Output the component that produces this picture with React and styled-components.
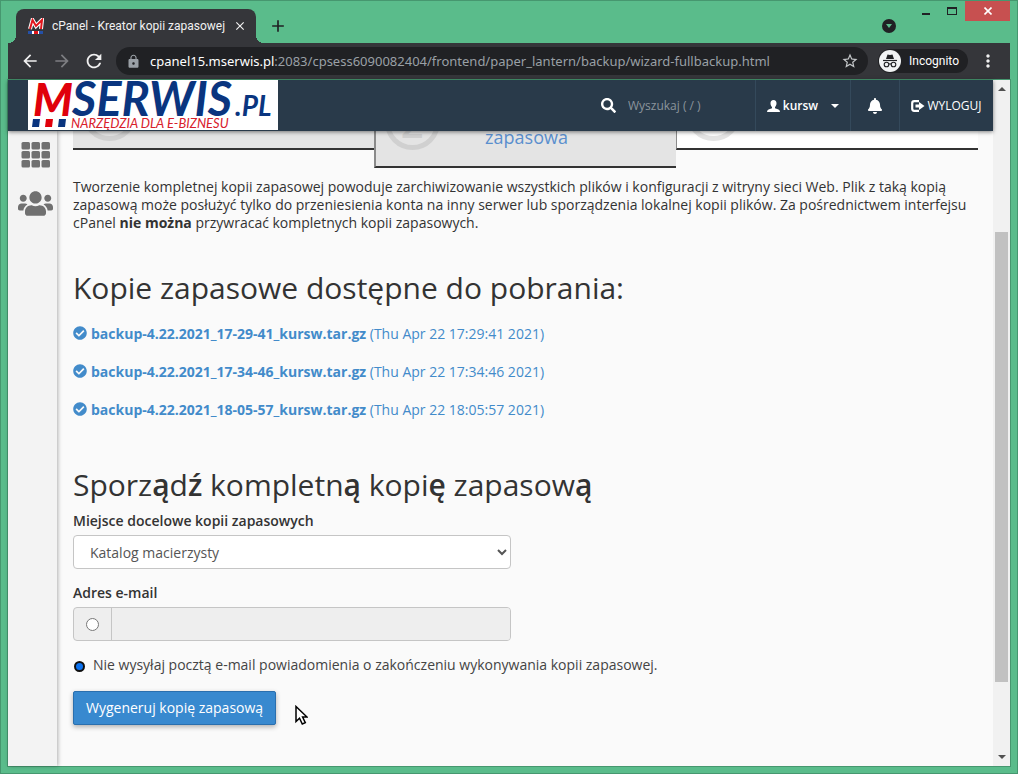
import React from "react";
import styled, { createGlobalStyle } from "styled-components";
import { FaUsers, FaSearch, FaBell, FaCheckCircle } from "react-icons/fa";
import { MdArrowBack, MdArrowForward, MdRefresh, MdLock, MdStarBorder, MdMoreVert, MdClose, MdAdd } from "react-icons/md";

const Global = createGlobalStyle`
  *, *::before, *::after { box-sizing: border-box; }
  body {
    margin: 0;
    color: #333;
    background: #fafafa;
    font: 14px/18px "Open Sans", "Noto Sans", sans-serif;
  }
  button, input, select { font: inherit; color: inherit; }
  h2, p, ul { margin: 0; padding: 0; }
`;

const Frame = styled.div`
  display: flex;
  flex-direction: column;
  min-height: 100vh;
  padding: 0 7px 7px;
  border: 1px solid #46976f;
  background: #5abc8b;
`;

const TabStrip = styled.div`
  display: flex;
  align-items: flex-start;
  height: 42px;
`;

const Tab = styled.div`
  position: relative;
  display: flex;
  align-items: center;
  width: 240px;
  height: 34px;
  margin: 8px 0 0 8px;
  padding: 0 8px 0 12px;
  border-radius: 8px 8px 0 0;
  background: #35363a;
  color: #f1f1f1;
  white-space: nowrap;
  &::before, &::after {
    content: "";
    position: absolute;
    bottom: 0;
    width: 8px;
    height: 8px;
  }
  &::before {
    left: -8px;
    background: radial-gradient(circle at 0 0, transparent 8px, #35363a 8px);
  }
  &::after {
    right: -8px;
    background: radial-gradient(circle at 100% 0, transparent 8px, #35363a 8px);
  }
`;

const TabTitle = styled.span`
  flex: 1;
  padding-left: 8px;
  font-family: Roboto, sans-serif;
  font-size: 12px;
`;

const IconButton = styled.button`
  display: flex;
  align-items: center;
  justify-content: center;
  flex: none;
  width: ${(p) => p.$w || 32}px;
  height: ${(p) => p.$h || 32}px;
  padding: 0;
  border: 0;
  background: ${(p) => p.$bg || "none"};
  color: ${(p) => p.$color || "#f1f1f1"};
`;

const WindowControls = styled.div`
  display: flex;
  align-items: flex-start;
  margin-left: auto;
`;

const TabMenu = styled.div`
  padding: 15px 13px 0 0;
`;

const NewTab = styled.div`
  padding: 9px 0 0 6px;
`;

const Toolbar = styled.div`
  display: flex;
  align-items: center;
  height: 37px;
  padding: 0 6px;
  border-bottom: 1px solid #232427;
  background: #35363a;
`;

const AddressBar = styled.div`
  display: flex;
  align-items: center;
  flex: 1;
  min-width: 0;
  height: 28px;
  margin: 0 10px 0 6px;
  padding: 0 2px 0 10px;
  border-radius: 14px;
  background: #202124;
`;

const Address = styled.span`
  flex: 1;
  margin-left: 9px;
  overflow: hidden;
  color: #9aa0a6;
  font-family: "Noto Sans", sans-serif;
  font-size: 13px;
  white-space: nowrap;
  b { color: #fff; font-weight: 400; }
`;

const Incognito = styled.div`
  display: flex;
  align-items: center;
  gap: 8px;
  height: 24px;
  margin-right: 4px;
  padding: 0 9px 0 1px;
  border-radius: 12px;
  background: #202124;
  color: #fff;
  font-family: Roboto, sans-serif;
  font-size: 12px;
`;

const Viewport = styled.div`
  display: flex;
  flex: 1;
  background: #fafafa;
  box-shadow: 0 0 0 1px #46976f;
`;

const Page = styled.div`
  display: flex;
  flex-direction: column;
  flex: 1;
  min-width: 0;
`;

const Scrollbar = styled.div`
  display: flex;
  flex-direction: column;
  align-items: center;
  width: 17px;
  padding: 7px 0;
  background: #f1f1f1;
  color: #505050;
`;

const Thumb = styled.div`
  flex: 450;
  width: 13px;
  background: #c1c1c1;
`;

const Track = styled.div`
  flex: ${(p) => p.$size};
`;

const Header = styled.header`
  position: relative;
  z-index: 2;
  display: flex;
  height: 51px;
  padding-left: 20px;
  background: #293a4a;
  box-shadow: 0 1px 4px rgba(0, 0, 0, 0.5);
  color: #fff;
`;

const LogoLink = styled.a`
  display: block;
  width: 250px;
  height: 50px;
  margin-right: auto;
  background: #fff;
`;

const Search = styled.label`
  display: flex;
  align-items: center;
  gap: 12px;
  width: 154px;
  input {
    width: 110px;
    padding: 0;
    border: 0;
    background: none;
    font-size: 12px;
  }
  input::placeholder { color: #8b949c; opacity: 1; }
`;

const NavButton = styled.button`
  display: flex;
  align-items: center;
  justify-content: center;
  width: ${(p) => p.$w}px;
  padding: 0;
  gap: ${(p) => p.$gap || 0}px;
  border: 0;
  border-left: 1px solid #34495b;
  background: none;
  font-size: 12px;
  font-weight: ${(p) => p.$weight || 400};
`;

const UserName = styled.span`
  padding-right: 10px;
`;

const Columns = styled.div`
  display: flex;
  flex: 1;
`;

const Sidebar = styled.nav`
  display: flex;
  flex-direction: column;
  align-items: center;
  gap: 16px;
  flex: none;
  width: 49px;
  padding: 8px 0 0 6px;
  background: #f3f3f3;
  box-shadow: 1px 0 4px rgba(0, 0, 0, 0.3);
`;

const SideLink = styled.a`
  display: flex;
  align-items: center;
  height: 32px;
  color: #707070;
`;

const Content = styled.main`
  flex: 1;
  min-width: 0;
  padding: 0 15px 16px 16px;
`;

const Steps = styled.div`
  display: flex;
  align-items: flex-start;
  height: 37px;
  margin-bottom: 10px;
`;

const Step = styled.div`
  display: flex;
  align-items: flex-end;
  flex: 1;
  height: ${(p) => (p.$active ? 37 : 19)}px;
  padding: 0 9px ${(p) => (p.$active ? 16 : 7)}px;
  overflow: hidden;
  border-bottom: 2px solid #333;
  border-left: ${(p) => (p.$first ? 0 : p.$active ? 2 : 1)}px solid #8a8a8a;
  background: ${(p) => (p.$todo ? "#fff" : "#e4e4e4")};
`;

const StepNumber = styled.span`
  display: flex;
  align-items: center;
  justify-content: center;
  flex: none;
  width: 55px;
  height: 55px;
  border: 5px solid ${(p) => (p.$todo ? "#e4e4e4" : "#d0d0d0")};
  border-radius: 50%;
  color: #d0d0d0;
  font-size: 40px;
  font-weight: 600;
  line-height: 44px;
`;

const StepTitle = styled.span`
  flex: 1;
  padding-right: 54px;
  color: #5a8fce;
  font-size: 18px;
  line-height: 26px;
  text-align: center;
`;

const Heading = styled.h2`
  font-size: 30px;
  font-weight: 400;
  line-height: 34px;
  b { font-weight: 600; }
`;

const Intro = styled.p`
  margin-bottom: 39px;
`;

const Backups = styled.ul`
  margin: 20px 0 49px;
  list-style: none;
  li { margin-bottom: 20px; }
`;

const BackupLink = styled.a`
  display: flex;
  align-items: flex-start;
  gap: 4px;
  color: #428bca;
  text-decoration: none;
  svg { margin-top: 1px; }
`;

const Form = styled.form`
  margin-top: 10px;
`;

const Label = styled.label`
  display: block;
  margin-bottom: 5px;
  font-weight: 600;
`;

const Field = styled.div`
  width: 438px;
  max-width: 100%;
  margin-bottom: 15px;
`;

const Select = styled.select`
  display: block;
  width: 100%;
  height: 34px;
  padding: 0 12px;
  border: 1px solid #c5c5c5;
  border-radius: 4px;
  background: #fff;
  color: #555;
`;

const InputGroup = styled.div`
  display: flex;
  height: 34px;
  overflow: hidden;
  border: 1px solid #c5c5c5;
  border-radius: 4px;
  background: #eee;
  input[type="email"] {
    flex: 1;
    min-width: 0;
    border: 0;
    border-left: 1px solid #c5c5c5;
    background: #eee;
  }
`;

const Addon = styled.span`
  display: flex;
  align-items: center;
  justify-content: center;
  width: 37px;
`;

const Radio = styled.input`
  width: 13px;
  height: 13px;
  margin: 0;
`;

const RadioFilled = styled.input`
  appearance: none;
  width: 11px;
  height: 11px;
  margin: 2px 0 0;
  border: 2px solid #101010;
  border-radius: 50%;
  background: #0b72f0;
`;

const Option = styled.label`
  display: flex;
  align-items: center;
  gap: 8px;
  padding-left: 1px;
  margin-bottom: 17px;
  color: #444;
`;

const Actions = styled.div`
  display: flex;
  align-items: flex-end;
  gap: 19px;
`;

const Primary = styled.button`
  height: 34px;
  padding: 0 12px;
  border: 1px solid #2a6fae;
  border-radius: 2px;
  background: #3889cf;
  box-shadow: 0 2px 5px rgba(0, 0, 0, 0.3);
  color: #fff;
`;

const backups = [
  ["backup-4.22.2021_17-29-41_kursw.tar.gz", "(Thu Apr 22 17:29:41 2021)"],
  ["backup-4.22.2021_17-34-46_kursw.tar.gz", "(Thu Apr 22 17:34:46 2021)"],
  ["backup-4.22.2021_18-05-57_kursw.tar.gz", "(Thu Apr 22 18:05:57 2021)"],
];

const Favicon = () => (
  <svg width="16" height="17" viewBox="0 0 16 17" aria-hidden="true">
    <path d="M2 11 4.500 2 8 8 14 2 13 11" fill="none" stroke="#fff" strokeWidth="4" />
    <path d="M2 11 4.500 2 8 8 14 2 13 11" fill="none" stroke="#e2161c" strokeWidth="2" />
    <path d="M0 13h4v3H0zM11 13h4v3h-4z" fill="#2450a8" />
    <path d="M4 13h2v3H4zM10 13h1v3h-1z" fill="#fff" />
    <path d="M6 13h4v3H6z" fill="#e2161c" />
  </svg>
);

const Logo = () => (
  <svg width="250" height="50" viewBox="0 0 250 50" role="img" aria-label="MSERWIS.PL">
    <g fontFamily="Lato, sans-serif" fontStyle="italic">
      <text x="5" y="36" fontSize="45" fontWeight="900" fill="#e0000b">M</text>
      <text x="44" y="36" fontSize="47" fontWeight="700" fill="#0a357f">SERWIS</text>
      <text x="207" y="36" fontSize="28" fontWeight="700" fill="#0a357f">.PL</text>
      <text x="43" y="48" fontSize="13" fill="#d8202a">NARZĘDZIA DLA E-BIZNESU</text>
    </g>
    <path d="M5 39h7l-1 8H4zM31 39h7l-1 8h-7z" fill="#0a357f" />
    <path d="M18 39h7l-1 8h-7z" fill="#e0000b" />
  </svg>
);

const IncognitoIcon = () => (
  <svg width="22" height="22" viewBox="0 0 22 22" aria-hidden="true">
    <circle cx="11" cy="11" r="11" fill="#f1f3f4" />
    <path d="M7 9 8.500 4.500 11 5l2.500-.5L15 9z" fill="#202124" />
    <path d="M4 10.500h14" stroke="#202124" strokeWidth="1.200" />
    <g fill="none" stroke="#202124" strokeWidth="1.100">
      <circle cx="7.500" cy="14.500" r="2.300" />
      <circle cx="14.500" cy="14.500" r="2.300" />
      <path d="M9.800 14.200q1.200-.8 2.400 0" />
    </g>
  </svg>
);

const UserIcon = () => (
  <svg width="13" height="12" viewBox="0 0 13 12" aria-hidden="true">
    <path d="M6.500 0C8.500 0 9.600 1.400 9.500 3.400 9.400 5 8.800 6.200 8 7v1.200l3.500 1.300Q13 10.200 13 12H0q0-1.800 1.500-2.500L5 8.200V7C4.200 6.200 3.600 5 3.500 3.400 3.400 1.400 4.500 0 6.500 0z" fill="#fff" />
  </svg>
);

const GridIcon = () => (
  <svg width="29" height="26" viewBox="0 0 29 26" fill="currentColor" aria-hidden="true">
    {[0, 9, 18].map((y) =>
      [0, 10, 20].map((x) => <rect key={`${x}-${y}`} x={x + 0.5} y={y} width="8.500" height="7.500" rx="1.500" />)
    )}
  </svg>
);

const Triangle = ({ up, size = 8 }) => (
  <svg width={size} height="4" viewBox="0 0 8 4" preserveAspectRatio="none" aria-hidden="true">
    <path d={up ? "M0 4h8L4 0z" : "M0 0h8L4 4z"} fill="currentColor" />
  </svg>
);

const Logout = () => (
  <svg width="14" height="12" viewBox="0 0 14 12" aria-hidden="true">
    <path d="M8 1.200H3.200Q1.200 1.200 1.200 3.200v5.600q0 2 2 2H8" fill="none" stroke="#fff" strokeWidth="2.200" />
    <path d="M4.500 4.500H8V2l5.500 4L8 10V7.500H4.500z" fill="#fff" />
  </svg>
);

const Cursor = () => (
  <svg width="13" height="20" viewBox="0 0 13 20" aria-hidden="true">
    <path d="M1 1.500v15l3.500-3.300L7.300 19l3-1.300L7.600 12H12z" fill="#fff" stroke="#000" strokeWidth="1.500" />
  </svg>
);

export default function App() {
  return (
    <>
      <Global />
      <Frame>
        <TabStrip>
          <Tab>
            <Favicon />
            <TabTitle>cPanel - Kreator kopii zapasowej</TabTitle>
            <IconButton $w={16} $h={16} aria-label="Close tab"><MdClose size={14} /></IconButton>
          </Tab>
          <NewTab>
            <IconButton $color="#202124" aria-label="New tab"><MdAdd size={20} /></IconButton>
          </NewTab>
          <WindowControls>
            <TabMenu>
              <IconButton $w={20} $h={20} aria-label="Search tabs">
                <svg width="16" height="16" viewBox="0 0 16 16">
                  <circle cx="8" cy="8" r="7" fill="#202124" />
                  <path d="M5 6h6l-3 4z" fill="#5abc8b" />
                </svg>
              </IconButton>
            </TabMenu>
            <IconButton $w={27} $h={20} aria-label="Minimize">
              <svg width="10" height="10" viewBox="0 0 10 10"><path d="M1 7h8v2H1z" fill="#202124" /></svg>
            </IconButton>
            <IconButton $w={26} $h={20} aria-label="Maximize">
              <svg width="10" height="8" viewBox="0 0 10 8"><path d="M0 0h10v8H0zM1 2v5h8V2z" fillRule="evenodd" fill="#202124" /></svg>
            </IconButton>
            <IconButton $w={45} $h={20} $bg="#c75050" aria-label="Close window">
              <svg width="8" height="8" viewBox="0 0 8 8"><path d="M.5.500l7 7M7.500.500l-7 7" stroke="#fff" strokeWidth="1.600" /></svg>
            </IconButton>
          </WindowControls>
        </TabStrip>

        <Toolbar>
          <IconButton aria-label="Back"><MdArrowBack size={20} /></IconButton>
          <IconButton $color="#7d7e82" aria-label="Forward"><MdArrowForward size={20} /></IconButton>
          <IconButton aria-label="Reload"><MdRefresh size={22} /></IconButton>
          <AddressBar>
            <MdLock size={15} color="#9aa0a6" />
            <Address><b>cpanel15.mserwis.pl</b>:2083/cpsess6090082404/frontend/paper_lantern/backup/wizard-fullbackup.html</Address>
            <IconButton $color="#c4c7c9" aria-label="Bookmark"><MdStarBorder size={18} /></IconButton>
          </AddressBar>
          <Incognito><IncognitoIcon />Incognito</Incognito>
          <IconButton aria-label="Menu"><MdMoreVert size={20} /></IconButton>
        </Toolbar>

        <Viewport>
          <Page>
            <Header>
              <LogoLink href="#"><Logo /></LogoLink>
              <Search>
                <FaSearch size={15} />
                <input type="search" placeholder="Wyszukaj ( / )" aria-label="Wyszukaj" />
              </Search>
              <NavButton $w={95} $gap={3} $weight={600}><UserIcon /><UserName>kursw</UserName><Triangle /></NavButton>
              <NavButton $w={49} aria-label="Powiadomienia"><FaBell size={16} /></NavButton>
              <NavButton $w={94} $gap={2}><Logout />WYLOGUJ</NavButton>
            </Header>
            <Columns>
              <Sidebar>
                <SideLink href="#" aria-label="Menu"><GridIcon /></SideLink>
                <SideLink href="#" aria-label="Użytkownicy"><FaUsers size={35} /></SideLink>
              </Sidebar>
              <Content>
                <Steps>
                  <Step $first><StepNumber /></Step>
                  <Step $active><StepNumber>2</StepNumber><StepTitle>zapasowa</StepTitle></Step>
                  <Step $todo><StepNumber $todo /></Step>
                </Steps>
                <Intro>
                  Tworzenie kompletnej kopii zapasowej powoduje zarchiwizowanie wszystkich plików i konfiguracji z witryny sieci Web. Plik z taką kopią zapasową może posłużyć tylko do przeniesienia konta na inny serwer lub sporządzenia lokalnej kopii plików. Za pośrednictwem interfejsu cPanel <b>nie można</b> przywracać kompletnych kopii zapasowych.
                </Intro>
                <Heading>Kopie zapasowe dostępne do pobrania:</Heading>
                <Backups>
                  {backups.map(([name, date]) => (
                    <li key={name}>
                      <BackupLink href="#"><FaCheckCircle size={14} /><span><b>{name}</b> {date}</span></BackupLink>
                    </li>
                  ))}
                </Backups>
                <Heading>Sporz<b>ą</b>d<b>ź</b> kompletn<b>ą</b> kopi<b>ę</b> zapasow<b>ą</b></Heading>
                <Form>
                  <Field>
                    <Label htmlFor="dest">Miejsce docelowe kopii zapasowych</Label>
                    <Select id="dest"><option>Katalog macierzysty</option></Select>
                  </Field>
                  <Field>
                    <Label htmlFor="email">Adres e-mail</Label>
                    <InputGroup>
                      <Addon><Radio type="radio" name="notify" aria-label="Adres e-mail" /></Addon>
                      <input type="email" id="email" disabled />
                    </InputGroup>
                  </Field>
                  <Option>
                    <RadioFilled type="radio" name="notify" defaultChecked />
                    Nie wysyłaj pocztą e-mail powiadomienia o zakończeniu wykonywania kopii zapasowej.
                  </Option>
                  <Actions>
                    <Primary type="button">Wygeneruj kopię zapasową</Primary>
                    <Cursor />
                  </Actions>
                </Form>
              </Content>
            </Columns>
          </Page>
          <Scrollbar>
            <Triangle up />
            <Track $size={141} />
            <Thumb />
            <Track $size={73} />
            <Triangle />
          </Scrollbar>
        </Viewport>
      </Frame>
    </>
  );
}
